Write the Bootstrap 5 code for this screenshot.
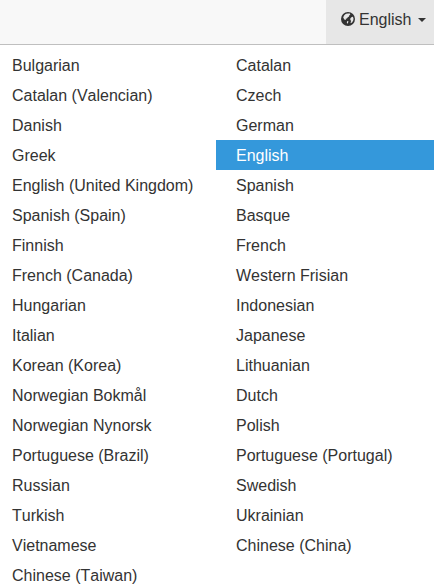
<!DOCTYPE html>
<html lang="en">
<head>
<meta charset="utf-8">
<meta name="viewport" content="width=device-width, initial-scale=1">
<title>Language menu</title>
<link href="https://cdn.jsdelivr.net/npm/bootstrap@5.3.0/dist/css/bootstrap.min.css" rel="stylesheet">
<style>
body { font: 16px/20px "Liberation Sans", Arial, sans-serif; font-kerning: none; color: #333; background: #fff; overflow: hidden; }
.topbar { height: 45px; background: #f8f8f8; border-bottom: 1px solid #bfbfbf; }
.lang-toggle { width: 108px; padding: 0 8px 4px 15px; background: #e7e7e7; color: #333; }
.lang-toggle svg { width: 14px; height: 14px; margin: 0 4px 2px 0; }
.lang-toggle::after { margin-left: auto; border-top-width: 4px; border-right-width: 4px; border-left-width: 4px; }
.lang-grid { display: grid; grid-template-columns: 216px 218px; padding-top: 5px; }
.lang-grid .dropdown-item { height: 30px; padding: 6px 0 4px 20px; color: #333; line-height: 20px; }
.lang-grid .dropdown-item:nth-child(odd) { padding-left: 12px; }
.lang-grid .dropdown-item.active { background: #3498db; color: #fff; }
</style>
</head>
<body>
<nav class="topbar d-flex justify-content-end">
  <a class="lang-toggle dropdown-toggle d-flex align-items-center text-decoration-none" href="#">
    <svg class="flex-shrink-0" viewBox="0 0 14 14" aria-hidden="true">
      <circle cx="7" cy="7" r="7" fill="#333"/>
      <path fill="#e7e7e7" d="M5.2 1.8 7 1.4 8.9 1.6 9.3 2.5 8.2 3.4 8 4.6 6.8 5.3 5.9 6.4 4.7 6.8 4.9 7.7 3.9 7.9 2.9 6.7 2.2 5.6 2.9 3.8 4 2.6zM6.3 9 7.5 9.6 6.9 11 6.2 11.7 5.8 10.3zM10.8 5 11.9 4.8 12.5 6.4 12.3 8.2 11.2 10.3 9.8 11.3 9.6 10.3 10.2 9.1 9.4 8 9.2 6.8 9.9 5.8z"/>
    </svg>
    <span>English</span>
  </a>
</nav>
<div class="lang-grid">
  <a class="dropdown-item" href="#">Bulgarian</a><a class="dropdown-item" href="#">Catalan</a>
  <a class="dropdown-item" href="#">Catalan (Valencian)</a><a class="dropdown-item" href="#">Czech</a>
  <a class="dropdown-item" href="#">Danish</a><a class="dropdown-item" href="#">German</a>
  <a class="dropdown-item" href="#">Greek</a><a class="dropdown-item active" href="#">English</a>
  <a class="dropdown-item" href="#">English (United Kingdom)</a><a class="dropdown-item" href="#">Spanish</a>
  <a class="dropdown-item" href="#">Spanish (Spain)</a><a class="dropdown-item" href="#">Basque</a>
  <a class="dropdown-item" href="#">Finnish</a><a class="dropdown-item" href="#">French</a>
  <a class="dropdown-item" href="#">French (Canada)</a><a class="dropdown-item" href="#">Western Frisian</a>
  <a class="dropdown-item" href="#">Hungarian</a><a class="dropdown-item" href="#">Indonesian</a>
  <a class="dropdown-item" href="#">Italian</a><a class="dropdown-item" href="#">Japanese</a>
  <a class="dropdown-item" href="#">Korean (Korea)</a><a class="dropdown-item" href="#">Lithuanian</a>
  <a class="dropdown-item" href="#">Norwegian Bokmål</a><a class="dropdown-item" href="#">Dutch</a>
  <a class="dropdown-item" href="#">Norwegian Nynorsk</a><a class="dropdown-item" href="#">Polish</a>
  <a class="dropdown-item" href="#">Portuguese (Brazil)</a><a class="dropdown-item" href="#">Portuguese (Portugal)</a>
  <a class="dropdown-item" href="#">Russian</a><a class="dropdown-item" href="#">Swedish</a>
  <a class="dropdown-item" href="#">Turkish</a><a class="dropdown-item" href="#">Ukrainian</a>
  <a class="dropdown-item" href="#">Vietnamese</a><a class="dropdown-item" href="#">Chinese (China)</a>
  <a class="dropdown-item" href="#">Chinese (Taiwan)</a>
</div>
<script src="https://cdn.jsdelivr.net/npm/bootstrap@5.3.0/dist/js/bootstrap.bundle.min.js"></script>
</body>
</html>
